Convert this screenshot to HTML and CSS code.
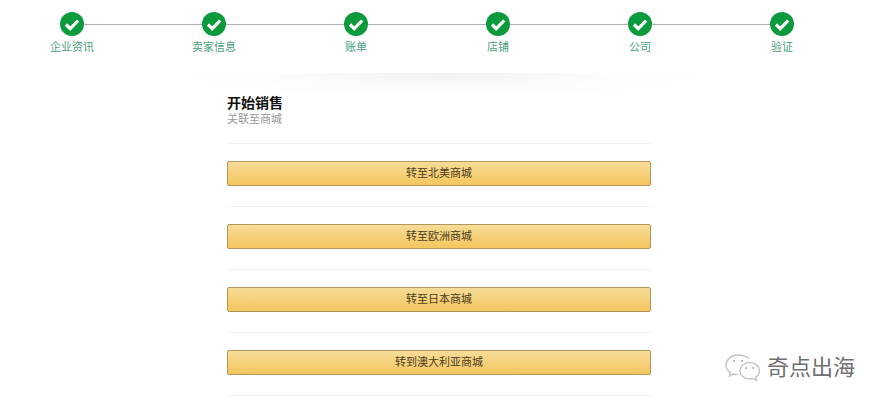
FILE: index.html
```html
<!DOCTYPE html>
<html lang="zh-CN">
<head>
    <meta charset="UTF-8">
    <title>开始销售</title>
    <link rel="stylesheet" href="styles.css">
</head>
<body>
    <ol class="steps">
        <li class="step"><span class="dot"><svg viewBox="0 0 24 24"><path d="M6 12.500l4.200 4.200 8-8.200"/></svg></span><span class="step-label">企业资讯</span></li>
        <li class="step"><span class="dot"><svg viewBox="0 0 24 24"><path d="M6 12.500l4.200 4.200 8-8.200"/></svg></span><span class="step-label">卖家信息</span></li>
        <li class="step"><span class="dot"><svg viewBox="0 0 24 24"><path d="M6 12.500l4.200 4.200 8-8.200"/></svg></span><span class="step-label">账单</span></li>
        <li class="step"><span class="dot"><svg viewBox="0 0 24 24"><path d="M6 12.500l4.200 4.200 8-8.200"/></svg></span><span class="step-label">店铺</span></li>
        <li class="step"><span class="dot"><svg viewBox="0 0 24 24"><path d="M6 12.500l4.200 4.200 8-8.200"/></svg></span><span class="step-label">公司</span></li>
        <li class="step"><span class="dot"><svg viewBox="0 0 24 24"><path d="M6 12.500l4.200 4.200 8-8.200"/></svg></span><span class="step-label">验证</span></li>
    </ol>

    <div class="shadow-line"></div>

    <main class="content">
        <h1 class="title">开始销售</h1>
        <p class="subtitle">关联至商城</p>
        <div class="market-row"><a class="market-btn" href="#">转至北美商城</a></div>
        <div class="market-row"><a class="market-btn" href="#">转至欧洲商城</a></div>
        <div class="market-row"><a class="market-btn" href="#">转至日本商城</a></div>
        <div class="market-row"><a class="market-btn" href="#">转到澳大利亚商城</a></div>
        <div class="market-end"></div>
    </main>

    <div class="watermark">
        <svg class="wechat" viewBox="0 0 38 30">
            <path d="M14 2C7 2 2 6.500 2 12c0 3.200 1.700 5.800 4.500 7.600L5.500 23l4-2.200c1.400.4 2.800.6 4.200.6"/>
            <path d="M25 5.500C22.500 3.300 18.500 2 14 2"/>
            <path d="M25.500 9.500c-5.500 0-9.500 3.700-9.500 8.200s4 8.200 9.500 8.200c1.200 0 2.300-.2 3.300-.5l3.700 2-1-3.100c2.400-1.500 4-3.900 4-6.600 0-4.500-4.500-8.200-10-8.200z"/>
            <circle class="eye" cx="10" cy="8" r="1"/>
            <circle class="eye" cx="18" cy="8" r="1"/>
            <circle class="eye" cx="22" cy="15" r="1"/>
            <circle class="eye" cx="29" cy="15" r="1"/>
        </svg>
        <span class="watermark-text">奇点出海</span>
    </div>
</body>
</html>
```

FILE: styles.css
```css
html, body {
    margin: 0;
    padding: 0;
}
body {
    width: 884px;
    height: 407px;
    overflow: hidden;
    position: relative;
    background: #fff;
    font-family: "Liberation Sans", "Noto Sans CJK SC", sans-serif;
}

/* progress on top */
.steps {
    display: flex;
    width: 852px;
    margin: 0 0 0 1px;
    padding: 12px 0 0 0;
    list-style: none;
}
.step {
    width: 142px;
    display: flex;
    flex-direction: column;
    align-items: center;
    position: relative;
}
.step + .step::before {
    content: "";
    position: absolute;
    top: 12px;
    right: 71px;
    width: 142px;
    height: 1px;
    background: #b0b0b0;
}
.dot {
    width: 24px;
    height: 24px;
    border-radius: 50%;
    background: #0b9a3c;
    position: relative;
    z-index: 1;
}
.dot svg {
    display: block;
    width: 24px;
    height: 24px;
}
.dot path {
    fill: none;
    stroke: #fff;
    stroke-width: 3.200;
}
.step-label {
    margin-top: 4px;
    font-size: 11px;
    line-height: 14px;
    color: #4a9f7c;
}

.shadow-line {
    width: 530px;
    height: 26px;
    margin: 19px 0 0 178px;
    background: radial-gradient(ellipse 50% 100% at 50% 0, #f0f0f0, #fbfbfb 50%, #fff 100%);
}

/* main block */
.content {
    width: 424px;
    margin: -4px 0 0 227px;
}
.title {
    margin: 0;
    font-size: 14px;
    line-height: 17px;
    font-weight: bold;
    color: #111;
}
.subtitle {
    margin: 0 0 17px 0;
    font-size: 11px;
    line-height: 14px;
    color: #999;
}
.market-row {
    border-top: 1px solid #f0f0f0;
    padding: 17px 0 20px 0;
}
.market-end {
    border-top: 1px solid #f0f0f0;
}
.market-btn {
    display: block;
    height: 23px;
    line-height: 23px;
    text-align: center;
    font-size: 11px;
    color: #4a3c1c;
    text-decoration: none;
    border: 1px solid #b3965a;
    border-radius: 2px;
    background: linear-gradient(#f6dc98, #f4c65e);
}

/* watermark */
.watermark {
    position: absolute;
    left: 724px;
    top: 353px;
    display: flex;
    align-items: center;
    gap: 5px;
}
.wechat {
    width: 38px;
    height: 30px;
}
.wechat path {
    fill: rgba(255, 255, 255, 0.8);
    stroke: #c4c4c4;
    stroke-width: 1.400;
}
.eye {
    fill: #aaa;
}
.watermark-text {
    font-size: 22px;
    line-height: 30px;
    color: #707070;
}
```
